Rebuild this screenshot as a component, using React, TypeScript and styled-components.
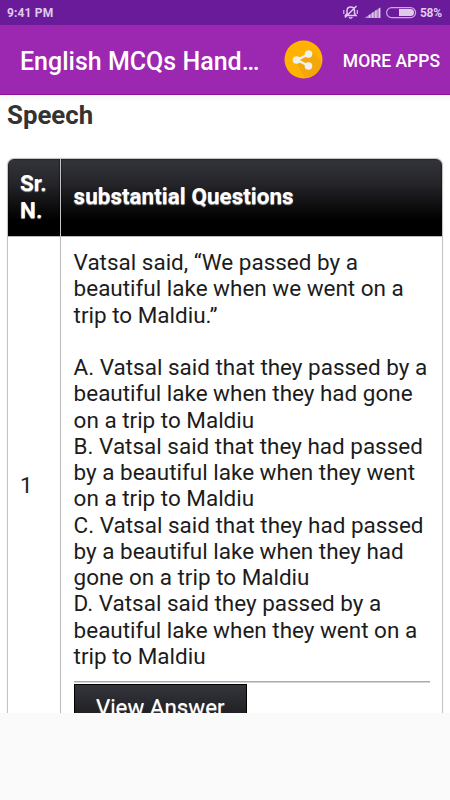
import React from 'react';
import styled, { createGlobalStyle } from 'styled-components';

const GlobalStyle = createGlobalStyle`
  * { box-sizing: border-box; }
  body { margin: 0; background: #fafafa; font-family: Roboto, sans-serif; }
`;

const Screen = styled.div`
  width: 450px;
  height: 800px;
  overflow: hidden;
  display: flex;
  flex-direction: column;
  background: #fafafa;
`;

const StatusBar = styled.header`
  height: 25px;
  flex: none;
  display: flex;
  align-items: center;
  padding: 0 8px 0 7px;
  background: #6a1b9a;
  color: #dfcbe9;
  font-size: 12px;
  font-weight: 700;
`;

const Clock = styled.time`
  flex: 1;
  letter-spacing: 0.15px;
`;

const StatusIcons = styled.svg`
  width: 76px;
  height: 25px;
  flex: none;
`;

const BatteryLevel = styled.span`
  width: 22px;
  margin-left: 2px;
  letter-spacing: -0.3px;
`;

const Toolbar = styled.div`
  height: 70px;
  flex: none;
  display: flex;
  align-items: center;
  padding: 0 10px 0 20px;
  background: #9c27b0;
  border-bottom: 1px solid #8e0d9f;
  color: #fff;
`;

const AppTitle = styled.h1`
  margin: 4px 0 0;
  width: 264px;
  font-size: 25px;
  line-height: 32px;
  font-weight: 500;
  white-space: nowrap;
`;

const ToolbarButton = styled.button`
  padding: 0;
  border: 0;
  background: none;
  color: #fff;
  font: 500 17.5px/24px Roboto, sans-serif;
  white-space: nowrap;
  margin-top: 2px;
`;

const ShareButton = styled(ToolbarButton)`
  width: 39px;
  height: 39px;
  flex: none;
  margin-top: 0;
  margin-right: 20px;
  svg { display: block; }
`;

const WebPage = styled.main`
  height: 618px;
  flex: none;
  overflow: hidden;
  padding: 0 7px;
  background: #fff;
  border-top: 5px solid #fafafa;
`;

const Heading = styled.h2`
  margin: 0;
  height: 58px;
  color: #333;
  font-size: 25.8px;
  line-height: 30px;
  font-weight: 700;
`;

const QuestionTable = styled.section`
  width: 436px;
  height: 600px;
  border: 1px solid #c4c4c4;
  border-radius: 7px 7px 0 0;
  box-shadow: 0 0 1px #bbb;
  overflow: hidden;
`;

const Row = styled.div<{ $head?: boolean }>`
  display: grid;
  grid-template-columns: 52px 1fr;
  height: ${(p) => (p.$head ? '78px' : '560px')};
  border-bottom: 1px solid #bbb;
  background: ${(p) =>
    p.$head ? 'linear-gradient(#34353c 0%, #232328 34%, #0d0d0e 62%, #000 80%)' : '#fff'};
`;

const HeaderCell = styled.div`
  display: flex;
  align-items: center;
  padding: 0 0 2px 12px;
  color: #fff;
  font-size: 22.5px;
  line-height: 26.27px;
  font-weight: 700;
  text-shadow: 0 1px 1px #aaa;
  box-shadow: inset 0 0 2px #000;
  & + & { border-left: 1px solid #c4c4c4; padding-left: 12.6px; }
`;

const NumberCell = styled.div`
  padding: 235px 0 0 12px;
  color: #222;
  font-size: 22.4px;
  line-height: 26px;
`;

const QuestionCell = styled.div`
  padding: 12px 12px 0 12.6px;
  border-left: 1px solid #bbb;
`;

const TextBlock = styled.p`
  margin: 0 0 26.27px;
  color: #1c1c1c;
  font-size: 22.48px;
  line-height: 26.27px;
  & + & { margin-bottom: 0; }
`;

const Line = styled.span`
  display: block;
  white-space: nowrap;
`;

const Divider = styled.hr`
  height: 2px;
  margin: 12px 0 1px;
  border: 0;
  border-top: 1px solid #aaa;
  background: #d4d4d4;
`;

const AnswerButton = styled.button`
  display: block;
  width: 173.4px;
  height: 50px;
  padding: 0 0 4px;
  border: 1px solid #000;
  background: linear-gradient(#34353c, #202024 60%, #000);
  color: #fff;
  font: 400 22.4px/44px Roboto, sans-serif;
  text-shadow: 0 1px 1px #aaa;
`;

const question = [
  'Vatsal said, “We passed by a',
  'beautiful lake when we went on a',
  'trip to Maldiu.”',
];

const options = [
  'A. Vatsal said that they passed by a',
  'beautiful lake when they had gone',
  'on a trip to Maldiu',
  'B. Vatsal said that they had passed',
  'by a beautiful lake when they went',
  'on a trip to Maldiu',
  'C. Vatsal said that they had passed',
  'by a beautiful lake when they had',
  'gone on a trip to Maldiu',
  'D. Vatsal said they passed by a',
  'beautiful lake when they went on a',
  'trip to Maldiu',
];

const Lines = ({ text }: { text: string[] }) => (
  <TextBlock>
    {text.map((line, i) => <Line key={i}>{line}</Line>)}
  </TextBlock>
);

const DeviceStatus = () => (
  <StatusIcons viewBox="0 0 76 25" fill="none">
    <g stroke="#dfcbe9" strokeWidth="1.5">
      <path d="M3.500 15.500 5 13.500V10.500Q5.300 7 8.700 7Q12.200 7 12.500 10.500V13.500L14 15.500ZM7 17.200Q8.700 19 10.400 17.200M3 17.500 14.500 6" />
      <path d="M1.800 10V14M15.300 10V14" strokeWidth="1.100" />
    </g>
    <path d="M22.500 18 38.500 7.300V18Z" fill="#b28bc9" />
    <path d="M27.500 18v-3.300M30.700 18v-5.400M33.900 18V10.400M37.500 18V8.200" stroke="#e2d0ec" strokeWidth="1.300" />
    <rect x="44.600" y="7.600" width="29" height="10" rx="5" stroke="#c8addb" strokeWidth="1.200" />
    <path d="M57 9h11.500q3.500 0 3.500 3.500T68.500 16H57Z" fill="#dfcbe9" />
  </StatusIcons>
);

const ShareIcon = () => (
  <svg width="39" height="39" viewBox="0 0 39 39">
    <circle cx="19.500" cy="19.500" r="19" fill="#ffb300" />
    <path d="m27 12 10.500 9.500C36.500 30 30 38 21 38.300L12 22Z" fill="#f4a70b" />
    <path d="M24 14.500 13 20l11 5.500" fill="none" stroke="#f1f1f1" strokeWidth="2.500" />
    <g fill="#f1f1f1">
      <circle cx="24.500" cy="14" r="3.800" />
      <circle cx="12.500" cy="20" r="3.800" />
      <circle cx="24.500" cy="26" r="3.800" />
    </g>
  </svg>
);

export default function App() {
  return (
    <Screen>
      <GlobalStyle />
      <StatusBar>
        <Clock>9:41 PM</Clock>
        <DeviceStatus />
        <BatteryLevel>58%</BatteryLevel>
      </StatusBar>
      <Toolbar>
        <AppTitle>English MCQs Hand…</AppTitle>
        <ShareButton aria-label="Share"><ShareIcon /></ShareButton>
        <ToolbarButton>MORE APPS</ToolbarButton>
      </Toolbar>
      <WebPage>
        <Heading>Speech</Heading>
        <QuestionTable>
          <Row $head>
            <HeaderCell>Sr.<br />N.</HeaderCell>
            <HeaderCell>substantial Questions</HeaderCell>
          </Row>
          <Row>
            <NumberCell>1</NumberCell>
            <QuestionCell>
              <Lines text={question} />
              <Lines text={options} />
              <Divider />
              <AnswerButton>View Answer</AnswerButton>
            </QuestionCell>
          </Row>
        </QuestionTable>
      </WebPage>
    </Screen>
  );
}
